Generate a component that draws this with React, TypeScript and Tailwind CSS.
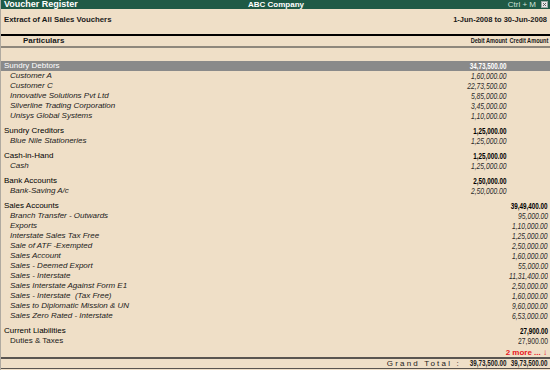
import React from "react";

type Child = { name: string; amount: string; italic?: boolean };
type Group = {
  name: string;
  total: string;
  side: "dr" | "cr";
  selected?: boolean;
  children: Child[];
};

const groups: Group[] = [
  {
    name: "Sundry Debtors",
    total: "34,73,500.00",
    side: "dr",
    selected: true,
    children: [
      { name: "Customer A", amount: "1,60,000.00" },
      { name: "Customer C", amount: "22,73,500.00" },
      { name: "Innovative Solutions Pvt Ltd", amount: "5,85,000.00" },
      { name: "Silverline Trading Corporation", amount: "3,45,000.00" },
      { name: "Unisys Global Systems", amount: "1,10,000.00" },
    ],
  },
  {
    name: "Sundry Creditors",
    total: "1,25,000.00",
    side: "dr",
    children: [{ name: "Blue Nile Stationeries", amount: "1,25,000.00" }],
  },
  {
    name: "Cash-in-Hand",
    total: "1,25,000.00",
    side: "dr",
    children: [{ name: "Cash", amount: "1,25,000.00" }],
  },
  {
    name: "Bank Accounts",
    total: "2,50,000.00",
    side: "dr",
    children: [{ name: "Bank-Saving A/c", amount: "2,50,000.00" }],
  },
  {
    name: "Sales Accounts",
    total: "39,49,400.00",
    side: "cr",
    children: [
      { name: "Branch Transfer - Outwards", amount: "95,000.00" },
      { name: "Exports", amount: "1,10,000.00" },
      { name: "Interstate Sales Tax Free", amount: "1,25,000.00" },
      { name: "Sale of ATF -Exempted", amount: "2,50,000.00" },
      { name: "Sales Account", amount: "1,60,000.00" },
      { name: "Sales - Deemed Export", amount: "55,000.00" },
      { name: "Sales - Interstate", amount: "11,31,400.00" },
      { name: "Sales Interstate Against Form E1", amount: "2,50,000.00" },
      { name: "Sales - Interstate  (Tax Free)", amount: "1,60,000.00" },
      { name: "Sales to Diplomatic Mission & UN", amount: "9,60,000.00" },
      { name: "Sales Zero Rated - Interstate", amount: "6,53,000.00" },
    ],
  },
  {
    name: "Current Liabilities",
    total: "27,900.00",
    side: "cr",
    children: [{ name: "Duties & Taxes", amount: "27,900.00", italic: false }],
  },
];

// amounts are drawn in a tall narrow face: squeeze the normal one from the right edge
const Amt = ({
  value,
  bold,
  className,
}: {
  value?: string;
  bold?: boolean;
  className?: string;
}) => (
  <div className={`flex justify-end whitespace-nowrap text-[9px] ${className ?? ""}`}>
    {value && (
      <span
        className={`inline-block origin-right ${
          bold ? "scale-x-[0.7] font-bold" : "scale-x-[0.75]"
        }`}
      >
        {value}
      </span>
    )}
  </div>
);

// one line of the register: label + debit + credit columns
const Row = ({
  label,
  dr,
  cr,
  bold,
  className,
  labelClass,
  amtClass,
}: {
  label: string;
  dr?: string;
  cr?: string;
  bold?: boolean;
  className?: string;
  labelClass?: string;
  amtClass?: string;
}) => (
  <div className={`flex h-[10px] items-center leading-[10px] ${className ?? ""}`}>
    <div className={`flex-1 whitespace-pre ${labelClass ?? ""}`}>{label}</div>
    <Amt value={dr} bold={bold} className={`w-[41px] ${amtClass ?? ""}`} />
    <Amt value={cr} bold={bold} className={`w-[43px] pr-[2px] ${amtClass ?? ""}`} />
  </div>
);

export default function App() {
  return (
    <div className="flex h-[370px] w-[550px] flex-col overflow-hidden border-l border-[#b0aaa0] bg-[#efdfc7] font-['Liberation_Sans',Arial,sans-serif] text-[8px] text-[#1a1a1a]">
      {/* title bar */}
      <div className="flex h-[9px] items-center bg-[#1f5a46] pl-[3px] pr-[2px] leading-[9px] text-white">
        <div className="flex-1 text-[9px] font-bold">Voucher Register</div>
        <div className="flex-1 text-center text-[8px] font-bold">ABC Company</div>
        <div className="flex flex-1 items-center justify-end gap-[5px]">
          <span className="text-[8px] text-[#cfe0d8]">Ctrl + M</span>
          <svg width="7" height="7" viewBox="0 0 7 7">
            <rect x="0.5" y="0.5" width="6" height="6" fill="#e8e8e8" stroke="#9aa8a2" />
            <path d="M2 2 L5 5 M5 2 L2 5" stroke="#555" strokeWidth="0.9" />
          </svg>
        </div>
      </div>

      {/* report heading */}
      <div className="flex h-[25px] items-start justify-between px-[3px] pt-[5px] font-bold">
        <span className="text-[7.8px]">Extract of All Sales Vouchers</span>
        <span className="text-[7.5px]">1-Jun-2008 to 30-Jun-2008</span>
      </div>

      <div className="h-[2px] bg-black" />
      <div className="flex h-[10px] items-center font-bold leading-[10px]">
        <div className="flex-1 pl-[22px]">Particulars</div>
        <div className="flex w-[41px] justify-end whitespace-nowrap">
          <span className="inline-block origin-right scale-x-[0.7]">Debit Amount</span>
        </div>
        <div className="flex w-[43px] justify-end whitespace-nowrap pr-[2px]">
          <span className="inline-block origin-right scale-x-[0.7]">Credit Amount</span>
        </div>
      </div>
      <div className="h-[2px] bg-[#8e877c]" />

      {/* body */}
      <div className="flex flex-1 flex-col pt-[13px]">
        {groups.map((g, i) => (
          <div key={g.name} className={i > 0 ? "mt-[5px]" : ""}>
            <Row
              label={g.name}
              dr={g.side === "dr" ? g.total : undefined}
              cr={g.side === "cr" ? g.total : undefined}
              bold
              className={g.selected ? "bg-[#8a8a8a] text-white" : "text-black"}
              labelClass="pl-[3px]"
            />
            {g.children.map((c) => (
              <Row
                key={c.name}
                label={c.name}
                dr={g.side === "dr" ? c.amount : undefined}
                cr={g.side === "cr" ? c.amount : undefined}
                labelClass={`pl-[9px] ${c.italic === false ? "" : "italic"}`}
                amtClass={`text-[#2a2a2a] ${c.italic === false ? "" : "italic"}`}
              />
            ))}
          </div>
        ))}
        <div className="mt-auto flex h-[9px] items-center justify-end pr-[3px] text-[8px] font-bold leading-[9px] text-[#e8141c]">
          2 more ... ↓
        </div>
      </div>

      {/* grand total */}
      <div className="h-[2px] bg-[#5a5550]" />
      <div className="flex h-[9px] items-center leading-[9px]">
        <div className="flex-1 pr-[5px] text-right tracking-[2.2px]">Grand Total :</div>
        <Amt value="39,73,500.00" bold className="w-[41px]" />
        <Amt value="39,73,500.00" bold className="w-[43px] pr-[2px]" />
      </div>
      <div className="h-[1px] bg-[#5a5550]" />
      <div className="h-[1px]" />
    </div>
  );
}
